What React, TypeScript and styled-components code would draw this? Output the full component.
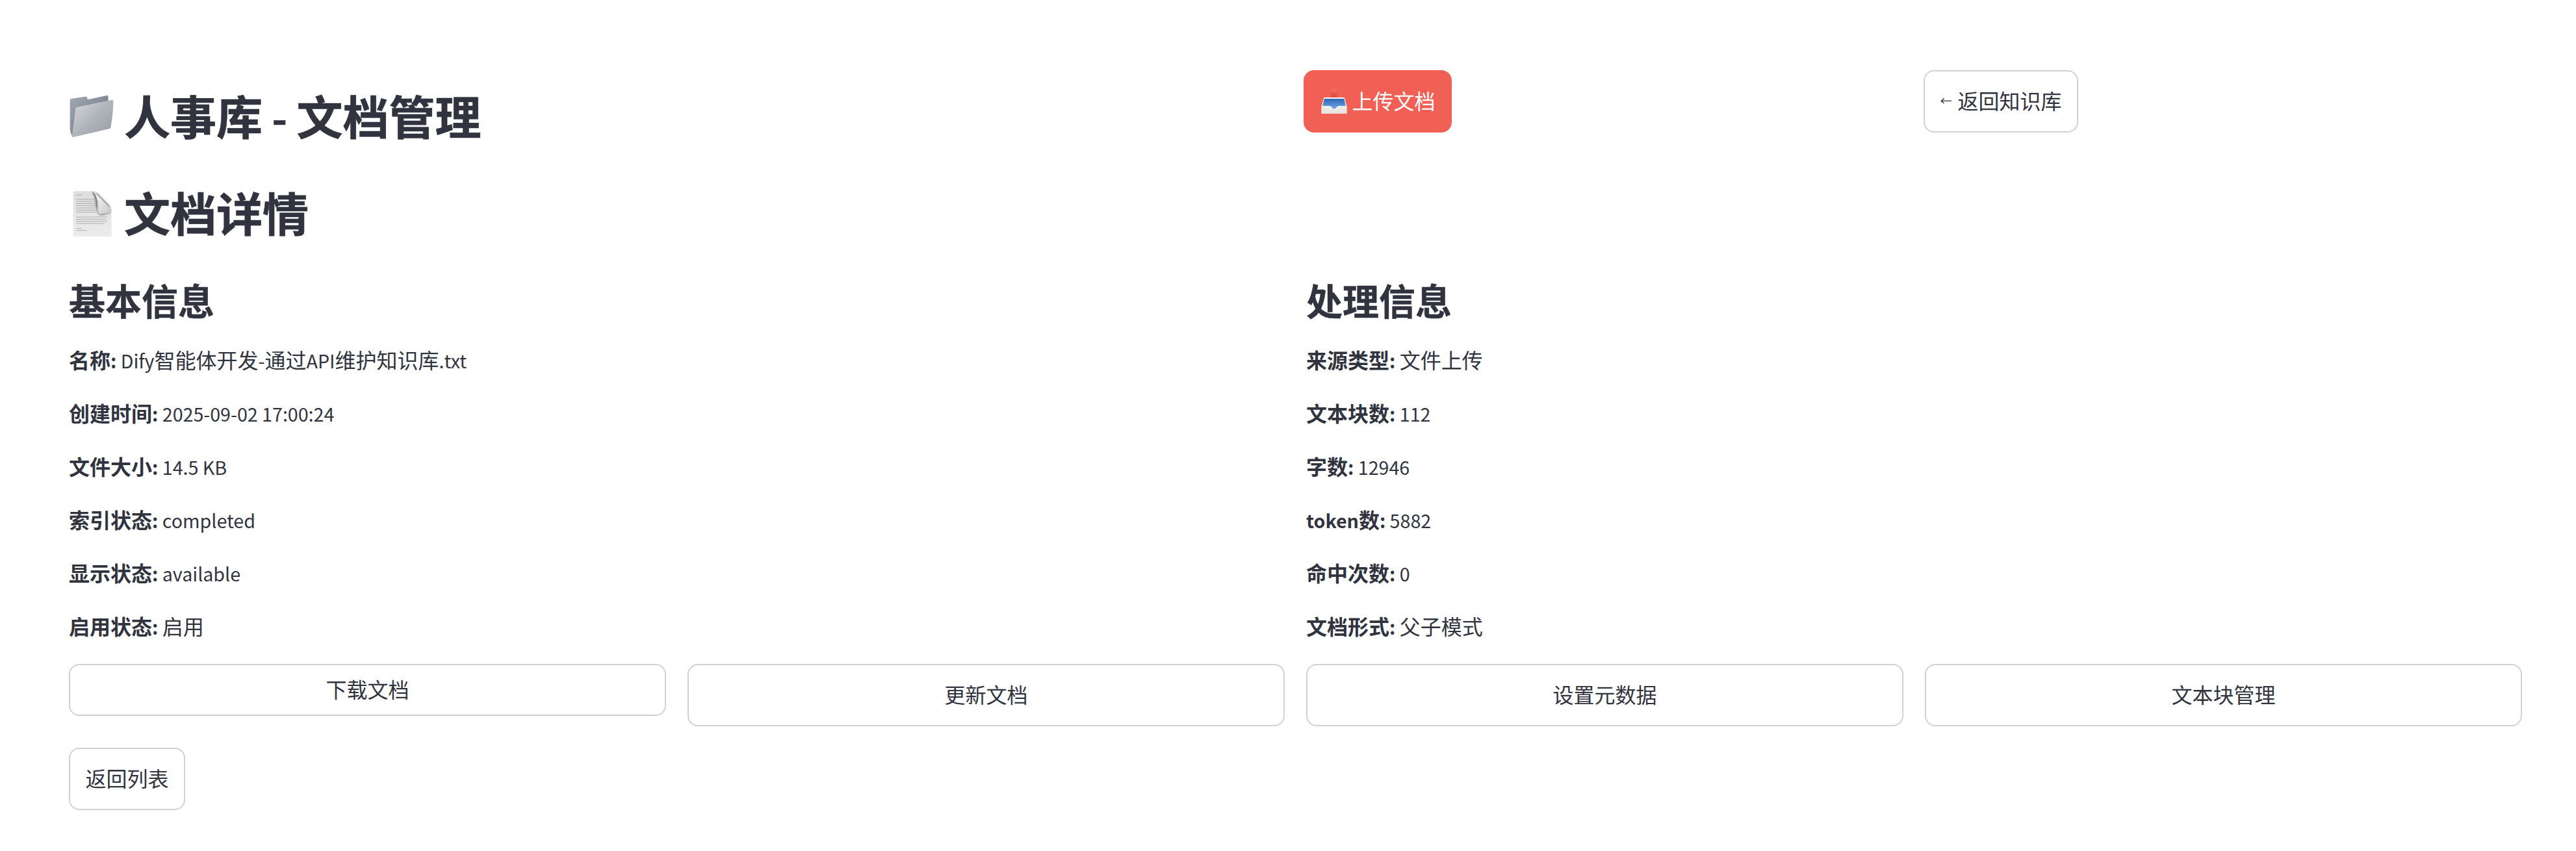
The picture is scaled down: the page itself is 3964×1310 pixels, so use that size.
import React from "react";
import styled, { createGlobalStyle } from "styled-components";

const GlobalStyle = createGlobalStyle`
  html, body { margin: 0; padding: 0; background: #ffffff; }
  body {
    color: #31333f;
    font-family: "Noto Sans CJK SC", "Noto Sans", sans-serif;
    -webkit-font-smoothing: antialiased;
  }
  * { box-sizing: border-box; }
`;

const Page = styled.main`
  padding: 108px 83px 40px 106px;
`;

const TopRow = styled.section`
  display: grid;
  grid-template-columns: minmax(0, 1fr) 921px 921px;
  column-gap: 33px;
  align-items: start;
`;

const Title = styled.h1<{ $top: number }>`
  display: flex;
  align-items: center;
  margin: ${(p) => p.$top}px 0 0;
  font-size: 71px;
  line-height: 84px;
  font-weight: 700;
  letter-spacing: 0;
  white-space: pre;
  -webkit-text-stroke: 0.7px #31333f;
`;

const TitleIcon = styled.svg`
  flex: none;
  width: 70px;
  height: 70px;
  margin: 8px 15px 0 0;
`;

const Button = styled.button<{ $height?: number; $primary?: boolean; $fill?: boolean }>`
  display: inline-flex;
  align-items: center;
  justify-content: center;
  height: ${(p) => p.$height ?? 96}px;
  width: ${(p) => (p.$fill ? "100%" : "auto")};
  padding: 0 23.5px 5px;
  border: 2px solid ${(p) => (p.$primary ? "#f06055" : "#d2d2d5")};
  border-radius: 16px;
  background: ${(p) => (p.$primary ? "#f06055" : "#ffffff")};
  color: ${(p) => (p.$primary ? "#ffffff" : "#31333f")};
  font-family: inherit;
  font-size: 32px;
  line-height: 52px;
  font-weight: 400;
  white-space: pre;
`;

const ButtonIcon = styled.svg`
  flex: none;
  width: 42px;
  height: 42px;
  margin: 5px 7px 0 0;
`;

const ArrowGlyph = styled.span`
  font-size: 18px;
  margin-right: 9px;
`;

const Latin = styled.span`
  font-size: 0.895em;
  line-height: 1;
`;

const InfoGrid = styled.section`
  display: grid;
  grid-template-columns: repeat(2, minmax(0, 1fr));
  column-gap: 33px;
  margin-top: 60px;
`;

const InfoColumn = styled.div`
  display: flex;
  flex-direction: column;
`;

const SectionTitle = styled.h3`
  margin: 0 0 32px;
  font-size: 56px;
  line-height: 68px;
  font-weight: 700;
  -webkit-text-stroke: 0.4px #31333f;
`;

const InfoList = styled.div`
  display: flex;
  flex-direction: column;
  gap: 30px;
`;

const InfoLine = styled.p`
  margin: 0;
  font-size: 32px;
  line-height: 52px;
  white-space: pre;
`;

const Label = styled.strong`
  font-weight: 700;
`;

const ActionRow = styled.section`
  display: grid;
  grid-template-columns: repeat(4, minmax(0, 1fr));
  column-gap: 33px;
  align-items: start;
  margin-top: 33px;
`;

const FooterRow = styled.section`
  display: flex;
  margin-top: 33px;
`;

const Mixed = ({ text }: { text: string }) => (
  <>
    {text.split(/([\x00-\x7f]+)/).map((part, i) =>
      /^[\x00-\x7f]+$/.test(part) ? <Latin key={i}>{part}</Latin> : part
    )}
  </>
);

const FolderIcon = () => (
  <TitleIcon viewBox="19 45 210 210" aria-hidden="true">
    <defs>
      <linearGradient id="folderBack" x1="0" y1="0" x2="1" y2="1">
        <stop offset="0" stopColor="#a0a8b2" />
        <stop offset="1" stopColor="#68717c" />
      </linearGradient>
      <linearGradient id="folderFront" x1="0" y1="0" x2="1" y2="1">
        <stop offset="0" stopColor="#d8dbe0" />
        <stop offset="0.5" stopColor="#b0b5bb" />
        <stop offset="1" stopColor="#979ca3" />
      </linearGradient>
    </defs>
    <path
      d="M24 72 Q24 67 29 66 L96 56 Q103 55 104 62 L105 70 L194 51 Q201 50 201 57 L200 80 L45 240 Q38 246 35 240 Q25 225 24 200 Z"
      fill="url(#folderBack)"
    />
    <path
      d="M50 112 Q51 106 57 105 L216 71 Q224 70 224 78 Q224 130 212 198 Q211 204 205 205 L40 243 Q33 244 34 236 Q43 170 50 112 Z"
      fill="url(#folderFront)"
    />
  </TitleIcon>
);

const PageIcon = () => (
  <TitleIcon viewBox="18 27 210 210" aria-hidden="true">
    <defs>
      <linearGradient id="pageBody" x1="0" y1="0" x2="0" y2="1">
        <stop offset="0" stopColor="#dedede" />
        <stop offset="1" stopColor="#ececec" />
      </linearGradient>
      <linearGradient id="curlFold" x1="0" y1="0" x2="1" y2="1">
        <stop offset="0" stopColor="#ffffff" />
        <stop offset="1" stopColor="#c4c4c4" />
      </linearGradient>
      <filter id="soft" x="-30%" y="-30%" width="160%" height="160%">
        <feGaussianBlur stdDeviation="5" />
      </filter>
    </defs>
    <path d="M38 28 L130 28 L215 112 L215 238 L38 238 Z" fill="url(#pageBody)" />
    <g fill="#8f8f8f" opacity="0.8">
      <rect x="52" y="44" width="28" height="2.5" />
      <rect x="52" y="64" width="82" height="2.5" />
      <rect x="52" y="74" width="86" height="2.5" />
      <rect x="52" y="84" width="88" height="2.5" />
      <rect x="52" y="94" width="90" height="2.5" />
      <rect x="52" y="104" width="86" height="2.5" />
      <rect x="52" y="114" width="90" height="2.5" />
      <rect x="52" y="124" width="88" height="2.5" />
      <rect x="52" y="146" width="144" height="2.5" />
      <rect x="52" y="156" width="138" height="2.5" />
      <rect x="52" y="166" width="144" height="2.5" />
      <rect x="52" y="176" width="130" height="2.5" />
      <rect x="52" y="198" width="24" height="2.5" />
      <rect x="52" y="208" width="50" height="2.5" />
    </g>
    <path d="M124 30 Q146 60 146 100 Q146 134 168 138 L208 128 L206 96 L150 40 Z" fill="#3f3f3f" opacity="0.75" filter="url(#soft)" />
    <path d="M132 28 L215 112 Q214 128 196 130 L168 134 Q150 134 150 112 Q152 60 132 28 Z" fill="url(#curlFold)" />
    <path d="M132 28 Q152 60 150 112 Q150 122 156 128 Q140 100 142 70 Q140 44 132 28 Z" fill="#555555" opacity="0.6" filter="url(#soft)" />
  </TitleIcon>
);

const TrayIcon = () => (
  <ButtonIcon viewBox="93 102 126 126" aria-hidden="true">
    <defs>
      <linearGradient id="trayWell" x1="0" y1="0" x2="0" y2="1">
        <stop offset="0" stopColor="#2f66b4" />
        <stop offset="1" stopColor="#6fa8ea" />
      </linearGradient>
      <linearGradient id="trayArrow" x1="0" y1="0" x2="0" y2="1">
        <stop offset="0" stopColor="#f4796a" />
        <stop offset="1" stopColor="#d63f30" />
      </linearGradient>
      <linearGradient id="trayBody" x1="0" y1="0" x2="0" y2="1">
        <stop offset="0" stopColor="#ffffff" />
        <stop offset="1" stopColor="#e6e2dc" />
      </linearGradient>
    </defs>
    <path d="M155 105 L182 130 L170 130 L170 152 L142 152 L142 130 L130 130 Z" fill="url(#trayArrow)" />
    <path d="M108 150 Q109 147 112 147 L200 147 Q203 147 204 150 L215 190 L215 222 L97 222 L97 190 Z" fill="url(#trayBody)" />
    <path d="M110 153 L202 153 L209 186 L176 186 Q168 188 164 196 Q156 204 148 196 Q144 188 136 186 L103 186 Z" fill="url(#trayWell)" />
  </ButtonIcon>
);

const basicInfo = [
  ["名称:", "Dify智能体开发-通过API维护知识库.txt"],
  ["创建时间:", "2025-09-02 17:00:24"],
  ["文件大小:", "14.5 KB"],
  ["索引状态:", "completed"],
  ["显示状态:", "available"],
  ["启用状态:", "启用"],
];

const processInfo = [
  ["来源类型:", "文件上传"],
  ["文本块数:", "112"],
  ["字数:", "12946"],
  ["token数:", "5882"],
  ["命中次数:", "0"],
  ["文档形式:", "父子模式"],
];

const InfoBlock = ({ title, rows }: { title: string; rows: string[][] }) => (
  <InfoColumn>
    <SectionTitle>{title}</SectionTitle>
    <InfoList>
      {rows.map(([label, value]) => (
        <InfoLine key={label}>
          <Label>
            <Mixed text={label} />
          </Label>
          <Mixed text={" " + value} />
        </InfoLine>
      ))}
    </InfoList>
  </InfoColumn>
);

export default function App() {
  return (
    <Page>
      <GlobalStyle />
      <TopRow>
        <Title $top={26}>
          <FolderIcon />
          <span>
            <Mixed text="人事库 - 文档管理" />
          </span>
        </Title>
        <div>
          <Button $primary>
            <TrayIcon />上传文档
          </Button>
        </div>
        <div>
          <Button>
            <ArrowGlyph>←</ArrowGlyph>返回知识库
          </Button>
        </div>
      </TopRow>
      <Title $top={65}>
        <PageIcon />文档详情
      </Title>
      <InfoGrid>
        <InfoBlock title="基本信息" rows={basicInfo} />
        <InfoBlock title="处理信息" rows={processInfo} />
      </InfoGrid>
      <ActionRow>
        <Button $fill $height={80}>下载文档</Button>
        <Button $fill>更新文档</Button>
        <Button $fill>设置元数据</Button>
        <Button $fill>文本块管理</Button>
      </ActionRow>
      <FooterRow>
        <Button>返回列表</Button>
      </FooterRow>
    </Page>
  );
}
